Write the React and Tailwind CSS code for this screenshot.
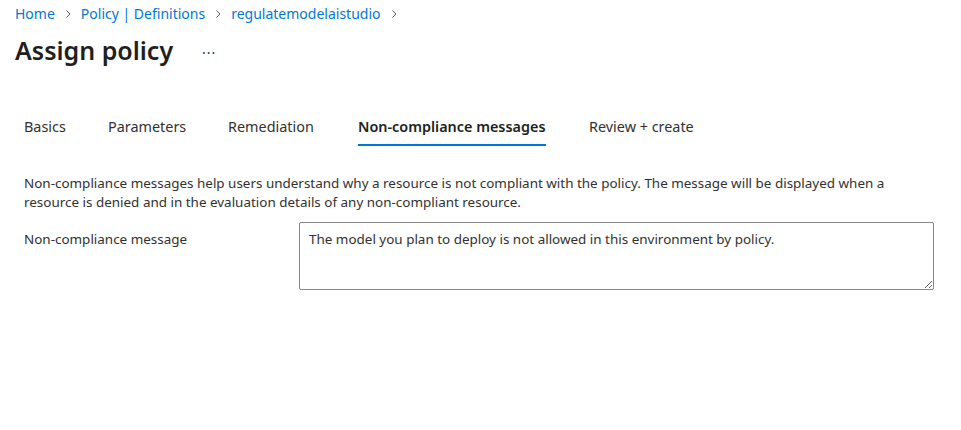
import React from 'react';

function Chevron() {
  return (
    <svg width="12" height="12" viewBox="0 0 12 12" className="mx-[7px] text-[#605e5c]">
      <path d="M4.5 2.5 L8 6 L4.5 9.5" fill="none" stroke="currentColor" strokeWidth="1" />
    </svg>
  );
}

const tabs = [
  { label: 'Basics', w: 'w-[84px]' },
  { label: 'Parameters', w: 'w-[120px]' },
  { label: 'Remediation', w: 'w-[130px]' },
  { label: 'Non-compliance messages', w: 'w-[231px]', active: true },
  { label: 'Review + create', w: 'w-[120px]' },
];

export default function App() {
  return (
    <div className="w-[961px] h-[430px] bg-white text-[#323130] font-['Noto_Sans',sans-serif]">
      {/* Breadcrumb */}
      <div className="flex items-center pl-[15px] pt-[5px] h-[22px] text-[14px] text-[#0078d4]">
        <span>Home</span>
        <Chevron />
        <span>Policy | Definitions</span>
        <Chevron />
        <span>regulatemodelaistudio</span>
        <Chevron />
      </div>

      {/* Title */}
      <div className="flex items-center pl-[15px] mt-[12px] h-[32px]">
        <h1 className="text-[25px] font-semibold text-[#201f1e] leading-none">Assign policy</h1>
        <span className="ml-[29px] mt-[5px] text-[#323130] text-[14px] leading-none tracking-[1px]">···</span>
      </div>

      {/* Tabs */}
      <div className="flex pl-[24px] mt-[47px] text-[14.4px]">
        {tabs.map(t => (
          <div key={t.label} className={`${t.w} shrink-0`}>
            <div className="inline-flex flex-col">
              <span className={`h-[28px] leading-[28px] whitespace-nowrap ${t.active ? 'font-semibold text-[#201f1e]' : 'text-[#323130]'}`}>{t.label}</span>
              <div className={`h-[2px] mt-[3px] ${t.active ? 'bg-[#0078d4]' : 'bg-transparent'}`} />
            </div>
          </div>
        ))}
      </div>

      {/* Content */}
      <div className="pl-[24px] pr-[27px] mt-[28px] text-[13.45px]">
        <p className="leading-[19px] text-[#323130]">
          Non-compliance messages help users understand why a resource is not compliant with the policy. The message will be displayed when a resource is denied and in the evaluation details of any non-compliant resource.
        </p>
        <div className="flex mt-[10px]">
          <label className="w-[275px] pt-[7px] text-[#323130]">Non-compliance message</label>
          <textarea
            className="w-[635px] h-[68px] border border-[#8a8886] rounded-[2px] px-[9px] py-[6px] text-[13.45px] text-[#323130] outline-none resize"
            defaultValue="The model you plan to deploy is not allowed in this environment by policy."
          />
        </div>
      </div>
    </div>
  );
}
